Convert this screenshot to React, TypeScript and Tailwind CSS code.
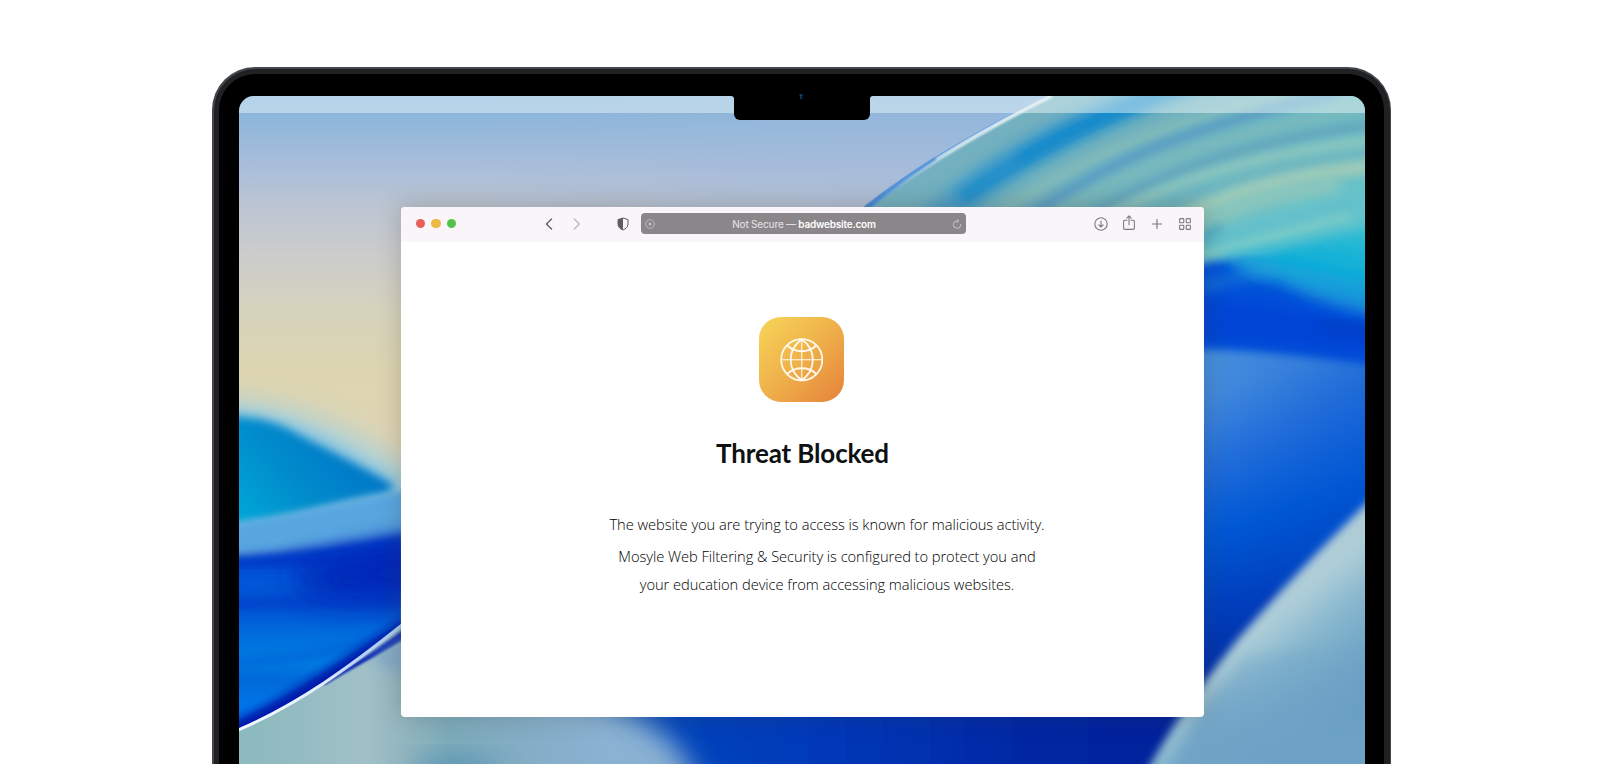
import React from "react";

function Wallpaper() {
  return (
    <svg
      className="absolute inset-0 h-full w-full"
      viewBox="239 95.5 1126 668.5"
      preserveAspectRatio="none"
      aria-hidden="true"
    >
      <defs>
        <linearGradient id="sky" gradientUnits="userSpaceOnUse" x1="0" y1="96" x2="0" y2="440">
          <stop offset="0" stopColor="#84b3dc" />
          <stop offset="0.07" stopColor="#8fb7da" />
          <stop offset="0.2" stopColor="#a9bdda" />
          <stop offset="0.32" stopColor="#bcc6d2" />
          <stop offset="0.46" stopColor="#cbcccb" />
          <stop offset="0.62" stopColor="#d6d3bd" />
          <stop offset="0.8" stopColor="#ddd5b0" />
          <stop offset="1" stopColor="#dfd4b4" />
        </linearGradient>
        <linearGradient id="skyRight" gradientUnits="userSpaceOnUse" x1="480" y1="0" x2="880" y2="0">
          <stop offset="0" stopColor="#a0b8dc" stopOpacity="0" />
          <stop offset="1" stopColor="#a0b8dc" stopOpacity="0.35" />
        </linearGradient>
        <linearGradient id="petal" gradientUnits="userSpaceOnUse" x1="239" y1="510" x2="340" y2="430">
          <stop offset="0" stopColor="#00a4d6" />
          <stop offset="0.5" stopColor="#008acb" />
          <stop offset="1" stopColor="#0078c8" />
        </linearGradient>
        <linearGradient id="deep" gradientUnits="userSpaceOnUse" x1="0" y1="545" x2="0" y2="740">
          <stop offset="0" stopColor="#0040cc" />
          <stop offset="0.2" stopColor="#0058d8" />
          <stop offset="0.3" stopColor="#004ed0" />
          <stop offset="0.45" stopColor="#006cdc" />
          <stop offset="0.6" stopColor="#007ee2" />
          <stop offset="0.68" stopColor="#0068d8" />
          <stop offset="0.82" stopColor="#0076e8" />
          <stop offset="1" stopColor="#0054d8" />
        </linearGradient>
        <linearGradient id="royal" gradientUnits="userSpaceOnUse" x1="1200" y1="350" x2="1300" y2="640">
          <stop offset="0" stopColor="#4690dc" />
          <stop offset="0.15" stopColor="#4189dc" />
          <stop offset="0.38" stopColor="#1f6cda" />
          <stop offset="0.58" stopColor="#0058d4" />
          <stop offset="0.8" stopColor="#0040be" />
          <stop offset="1" stopColor="#0030a8" />
        </linearGradient>
        <linearGradient id="royalEdge" gradientUnits="userSpaceOnUse" x1="1220" y1="0" x2="1365" y2="0">
          <stop offset="0" stopColor="#0052d2" stopOpacity="0" />
          <stop offset="1" stopColor="#0052d2" stopOpacity="0.35" />
        </linearGradient>
        <linearGradient id="ice" gradientUnits="userSpaceOnUse" x1="1255" y1="610" x2="1345" y2="718">
          <stop offset="0" stopColor="#b0cdd8" />
          <stop offset="0.15" stopColor="#abccd7" />
          <stop offset="0.4" stopColor="#88b7ce" />
          <stop offset="0.7" stopColor="#72a7c7" />
          <stop offset="1" stopColor="#6498c2" />
        </linearGradient>
        <linearGradient id="iceLow" gradientUnits="userSpaceOnUse" x1="0" y1="610" x2="0" y2="740">
          <stop offset="0" stopColor="#6ea2c6" stopOpacity="0" />
          <stop offset="1" stopColor="#6ea2c6" stopOpacity="0.9" />
        </linearGradient>
        <linearGradient id="bottom" gradientUnits="userSpaceOnUse" x1="239" y1="0" x2="1200" y2="0">
          <stop offset="0" stopColor="#8bbabf" />
          <stop offset="0.06" stopColor="#93bcc2" />
          <stop offset="0.13" stopColor="#a2c0c8" />
          <stop offset="0.17" stopColor="#93b6bf" />
          <stop offset="0.22" stopColor="#7cabb9" />
          <stop offset="0.3" stopColor="#84adc6" />
          <stop offset="0.38" stopColor="#8ab2d2" />
          <stop offset="1" stopColor="#8ab2d2" />
        </linearGradient>
        <linearGradient id="bottomBlue" gradientUnits="userSpaceOnUse" x1="640" y1="0" x2="1180" y2="0">
          <stop offset="0" stopColor="#0046bc" />
          <stop offset="0.35" stopColor="#0038b8" />
          <stop offset="0.7" stopColor="#0028a4" />
          <stop offset="1" stopColor="#00209a" />
        </linearGradient>
        <linearGradient id="rim" gradientUnits="userSpaceOnUse" x1="864" y1="207" x2="1050" y2="96">
          <stop offset="0" stopColor="#3f86d8" />
          <stop offset="0.25" stopColor="#9cc4e0" />
          <stop offset="0.5" stopColor="#d3e6ee" />
          <stop offset="1" stopColor="#f0f4f8" />
        </linearGradient>
        <linearGradient id="lowerRim" gradientUnits="userSpaceOnUse" x1="239" y1="0" x2="401" y2="0">
          <stop offset="0" stopColor="#f4f9ff" />
          <stop offset="0.5" stopColor="#e4effd" />
          <stop offset="0.75" stopColor="#b6d0f6" />
          <stop offset="1" stopColor="#a9cdf0" />
        </linearGradient>
        <linearGradient id="swoosh" gradientUnits="userSpaceOnUse" x1="1000" y1="110" x2="1130" y2="320">
          <stop offset="0" stopColor="#74b0c0" />
          <stop offset="0.4" stopColor="#72b3be" />
          <stop offset="1" stopColor="#68c0c8" />
        </linearGradient>
        <linearGradient id="cyanFall" gradientUnits="userSpaceOnUse" x1="1320" y1="225" x2="1300" y2="320">
          <stop offset="0" stopColor="#2abbd4" />
          <stop offset="0.4" stopColor="#0eaed8" />
          <stop offset="0.7" stopColor="#1c92da" />
          <stop offset="1" stopColor="#0c5cd8" />
        </linearGradient>
        <filter id="b1" x="-20%" y="-20%" width="140%" height="140%"><feGaussianBlur stdDeviation="0.8" /></filter>
        <filter id="b3" x="-30%" y="-30%" width="160%" height="160%"><feGaussianBlur stdDeviation="3.4" /></filter>
        <filter id="b4" x="-30%" y="-30%" width="160%" height="160%"><feGaussianBlur stdDeviation="4.4" /></filter>
        <filter id="b7" x="-40%" y="-40%" width="180%" height="180%"><feGaussianBlur stdDeviation="7" /></filter>
        <filter id="b14" x="-50%" y="-50%" width="200%" height="200%"><feGaussianBlur stdDeviation="14" /></filter>
        <clipPath id="swooshClip">
          <path d="M864 207 C917 167 985 126 1053 94 L1400 80 L1400 400 L800 400 Z" />
        </clipPath>
        <clipPath id="lowerClip">
          <path d="M200 752 L239 729 C300 703 350 666 401 626 L401 400 L200 400 Z" />
        </clipPath>
        <clipPath id="glassClip">
          <path d="M239 729 C300 703 350 666 401 625 L900 625 L900 770 L239 770 Z" />
        </clipPath>
      </defs>

      {/* sky */}
      <rect x="239" y="95" width="1126" height="670" fill="url(#sky)" />
      <rect x="480" y="95" width="620" height="120" fill="url(#skyRight)" />

      {/* left petal and its halo */}
      <path d="M180 402 C270 394 330 420 392 458 L450 496 L450 560 L180 560 Z" fill="#a6d2dc" filter="url(#b14)" />
      <path d="M180 412 C270 402 320 434 396 480 L420 540 L180 560 Z" fill="#7cc0e0" filter="url(#b7)" />
      <path d="M180 416 C255 413 274 421 296 433 C330 451 366 468 392 484 Q396 490 376 494 C330 502 280 521 180 529 Z" fill="url(#petal)" filter="url(#b4)" />
      <path d="M180 530 C280 521 340 502 430 486 L430 528 C350 540 290 552 180 554 Z" fill="#58a6e0" filter="url(#b3)" />

      {/* left blue folds */}
      <g clipPath="url(#lowerClip)">
        <path d="M180 556 C270 554 330 544 440 526 L440 780 L180 780 Z" fill="url(#deep)" filter="url(#b4)" />
        <path d="M290 568 C330 558 370 548 440 536 L440 595 C390 602 340 604 300 592 Z" fill="#0022b2" opacity="0.75" filter="url(#b14)" />
        <path d="M330 564 C370 554 400 548 440 540 L440 592 C400 598 370 596 330 586 Z" fill="#0022b6" opacity="0.5" filter="url(#b14)" />
        <path d="M190 564 C270 562 320 560 420 552" fill="none" stroke="#002cbc" strokeWidth="7" opacity="0.6" filter="url(#b4)" />
        <path d="M190 604 C270 602 320 606 430 584" fill="none" stroke="#0034c4" strokeWidth="8" opacity="0.45" filter="url(#b4)" />
        <path d="M190 664 C270 662 320 656 380 638" fill="none" stroke="#0054d0" strokeWidth="8" opacity="0.5" filter="url(#b4)" />
        <path d="M229 742 C300 708 350 672 412 630 L412 614 C350 652 300 690 229 724 Z" fill="#0018a8" filter="url(#b4)" />
      </g>

      {/* bottom left glass */}
      <g clipPath="url(#glassClip)">
        <rect x="239" y="620" width="660" height="150" fill="url(#bottom)" />
        <path d="M322 684 C350 666 376 650 410 624 L412 634 C380 654 352 668 326 684 Z" fill="#0c2cb4" filter="url(#b1)" />
        <path d="M370 656 C382 648 396 640 420 630 L420 668 L392 672 Z" fill="#6f9ccc" opacity="0.5" filter="url(#b7)" />
        <ellipse cx="455" cy="772" rx="44" ry="14" fill="#4c8bb4" opacity="0.75" filter="url(#b14)" />
      </g>
      <path d="M237 730 C300 703 350 666 402 624.5" fill="none" stroke="url(#lowerRim)" strokeWidth="3" />

      {/* right royal field */}
      <rect x="1190" y="330" width="190" height="434" fill="url(#royal)" />
      <rect x="1220" y="330" width="160" height="260" fill="url(#royalEdge)" />
      <path d="M575 690 C645 712 685 740 700 790 L1220 790 L1220 690 Z" fill="url(#bottomBlue)" filter="url(#b14)" />
      <path d="M720 700 L1220 700 L1220 780 L740 780 Z" fill="url(#bottomBlue)" filter="url(#b7)" />
      <path d="M1410 464 L1363 507 C1322 547 1275 596 1238 639 C1206 680 1178 714 1142 780 L1410 800 Z" fill="url(#ice)" filter="url(#b4)" />
      <path d="M1245 655 C1214 692 1190 724 1166 780 L1400 800 L1400 640 Z" fill="url(#iceLow)" filter="url(#b7)" />

      {/* upper right swoosh */}
      <g clipPath="url(#swooshClip)">
        <rect x="850" y="90" width="520" height="190" fill="url(#swoosh)" />
        <path d="M1160 270 C1230 224 1300 195 1410 180 L1410 290 L1160 290 Z" fill="#66c4cc" filter="url(#b7)" />
        <path d="M905 250 C970 175 1060 125 1210 70" fill="none" stroke="#3d98cc" strokeWidth="28" opacity="0.65" filter="url(#b7)" />
        <path d="M960 200 C1005 168 1070 128 1200 78" fill="none" stroke="#128acb" strokeWidth="16" filter="url(#b7)" />
        <path d="M1020 158 C1060 134 1110 110 1200 78" fill="none" stroke="#128acb" strokeWidth="10" filter="url(#b4)" />
        <path d="M945 250 C1060 165 1150 125 1330 84" fill="none" stroke="#82bcba" strokeWidth="9" filter="url(#b4)" />
        <path d="M985 250 C1090 165 1180 128 1340 92" fill="none" stroke="#5a9fc4" strokeWidth="11" filter="url(#b4)" />
        <path d="M1000 250 C1110 170 1230 128 1410 100" fill="none" stroke="#7cb9bb" strokeWidth="8" filter="url(#b4)" />
        <path d="M1040 250 C1150 168 1260 136 1410 120" fill="none" stroke="#64a6bc" strokeWidth="10" filter="url(#b4)" />
        <path d="M1050 250 C1160 176 1270 150 1410 136" fill="none" stroke="#8ec6bd" strokeWidth="9" filter="url(#b4)" />
        <path d="M1100 250 C1190 182 1290 162 1410 150" fill="none" stroke="#70b4be" strokeWidth="8" filter="url(#b4)" />
        <path d="M1110 260 C1210 188 1300 172 1410 162" fill="none" stroke="#9dcab8" strokeWidth="15" filter="url(#b4)" />
        <path d="M1150 250 C1220 208 1270 194 1340 184" fill="none" stroke="#8ec8bc" strokeWidth="16" filter="url(#b7)" />
        <path d="M1170 256 C1230 240 1270 222 1360 200" fill="none" stroke="#5ebccb" strokeWidth="9" filter="url(#b7)" />
        <path d="M1170 264 C1230 248 1270 236 1350 216" fill="none" stroke="#7acbc6" strokeWidth="9" filter="url(#b4)" />
        <path d="M1180 250 L1222 226" fill="none" stroke="#3f9fc4" strokeWidth="7" opacity="0.7" filter="url(#b4)" />
      </g>

      {/* cobalt band and the cyan wash falling into it */}
      <path d="M1160 276 C1215 254 1245 258 1275 266 L1420 270 L1420 368 C1330 362 1260 344 1160 350 Z" fill="#0050d8" filter="url(#b4)" />
      <path d="M1170 296 C1260 300 1310 312 1420 332 L1420 358 C1330 354 1260 336 1170 340 Z" fill="#0044d6" filter="url(#b7)" />
      <path d="M1226 258 C1290 248 1340 232 1420 214 L1420 324 C1350 312 1310 298 1280 282 C1258 280 1240 272 1226 258 Z" fill="url(#cyanFall)" filter="url(#b7)" />
      <path d="M1200 286 C1225 280 1250 276 1275 264" fill="none" stroke="#2e94d8" strokeWidth="8" opacity="0.6" filter="url(#b7)" />
      <path d="M1320 324 L1420 340" fill="none" stroke="#003cc0" strokeWidth="16" opacity="0.6" filter="url(#b7)" />

      {/* bright rim */}
      <path d="M864 207 C917 167 985 126 1051 95 L1047 95 C982 126 916 166 863 207 Z" fill="#3b82dc" />
      <path d="M868 207 C918 169 985 128.5 1052 95" fill="none" stroke="url(#rim)" strokeWidth="4" filter="url(#b1)" />
      <path d="M865 208 C891 188 911 174 936 158" fill="none" stroke="#3480d4" strokeWidth="2.4" opacity="0.8" filter="url(#b1)" />
    </svg>
  );
}

function ShieldIcon() {
  return (
    <svg className="h-[14px] w-[12px]" viewBox="0 0 12 14" fill="none" aria-hidden="true">
      <path d="M6 1 L11 2.6 V7 C11 10 8.6 12 6 13 C3.4 12 1 10 1 7 V2.6 Z" stroke="#5f5b60" strokeWidth="1" strokeLinejoin="round" />
      <path d="M6 1 V13 C3.4 12 1 10 1 7 V2.6 Z" fill="#5f5b60" />
    </svg>
  );
}

function Toolbar() {
  return (
    <div className="flex h-[35px] shrink-0 items-center bg-[#f9f5f9] pb-[2px]">
      <div className="ml-[14.5px] flex gap-[6px]">
        <span className="size-[9.5px] rounded-full bg-[#e5605a]" />
        <span className="size-[9.5px] rounded-full bg-[#eeb844]" />
        <span className="size-[9.5px] rounded-full bg-[#56c24c]" />
      </div>
      <svg className="ml-[88.5px] h-[12px] w-[8px]" viewBox="0 0 8 12" fill="none" stroke="#5f5b60" strokeWidth="1.3" strokeLinecap="round" strokeLinejoin="round" aria-hidden="true">
        <path d="M6.6 1 L1.4 6 L6.6 11" />
      </svg>
      <svg className="ml-[20px] h-[12px] w-[8px]" viewBox="0 0 8 12" fill="none" stroke="#bcb8bd" strokeWidth="1.3" strokeLinecap="round" strokeLinejoin="round" aria-hidden="true">
        <path d="M1.2 1 L6.4 6 L1.2 11" />
      </svg>
      <div className="ml-[36.5px] flex">
        <ShieldIcon />
      </div>
      <div className="ml-[12px] flex h-[21px] w-[325px] items-center justify-between rounded-[4px] bg-[#8a8689] px-[4px]">
        <svg className="size-[10px]" viewBox="0 0 10 10" fill="none" stroke="#c3c0c3" strokeWidth="0.9" aria-hidden="true">
          <circle cx="5" cy="5" r="4.3" />
          <circle cx="5" cy="5" r="1.5" fill="#c3c0c3" stroke="none" />
        </svg>
        <p className="pl-[1px] font-['Inter','Liberation_Sans',sans-serif] text-[10px] leading-[14px] font-medium tracking-[-0.2px] whitespace-nowrap text-[#dedcde]">
          Not Secure — <span className="font-semibold text-white">badwebsite.com</span>
        </p>
        <svg className="size-[10px]" viewBox="0 0 10 10" fill="none" stroke="#c8c5c8" strokeWidth="1" strokeLinecap="round" strokeLinejoin="round" aria-hidden="true">
          <path d="M8.7 5.4 A3.7 3.7 0 1 1 5 1.9 H6.2" />
          <path d="M4.9 0.3 L6.6 1.9 L4.9 3.5" />
        </svg>
      </div>
      <div className="ml-auto flex items-center pr-[13px] text-[#7d797e]">
        <svg className="size-[14px]" viewBox="0 0 14 14" fill="none" stroke="currentColor" strokeWidth="1.1" strokeLinecap="round" strokeLinejoin="round" aria-hidden="true">
          <circle cx="7" cy="7" r="6.2" />
          <path d="M7 4 V9.8 M4.8 7.8 L7 10 L9.2 7.8" />
        </svg>
        <svg className="-mt-[1px] ml-[15px] h-[16px] w-[12px]" viewBox="0 0 12 16" fill="none" stroke="currentColor" strokeWidth="1.1" strokeLinecap="round" strokeLinejoin="round" aria-hidden="true">
          <path d="M4 5.3 H1.8 Q0.6 5.3 0.6 6.5 V13.2 Q0.6 14.4 1.8 14.4 H10.2 Q11.4 14.4 11.4 13.2 V6.5 Q11.4 5.3 10.2 5.3 H8" />
          <path d="M6 9.8 V1 M3.8 3.1 L6 0.9 L8.2 3.1" />
        </svg>
        <svg className="ml-[17px] size-[10px]" viewBox="0 0 10 10" fill="none" stroke="currentColor" strokeWidth="1.2" strokeLinecap="round" aria-hidden="true">
          <path d="M5 0.5 V9.5 M0.5 5 H9.5" />
        </svg>
        <svg className="ml-[17px] size-[12px]" viewBox="0 0 12 12" fill="none" stroke="currentColor" strokeWidth="1.1" aria-hidden="true">
          <rect x="0.6" y="0.6" width="4.2" height="4.2" rx="0.7" />
          <rect x="7.2" y="0.6" width="4.2" height="4.2" rx="0.7" />
          <rect x="0.6" y="7.2" width="4.2" height="4.2" rx="0.7" />
          <rect x="7.2" y="7.2" width="4.2" height="4.2" rx="0.7" />
        </svg>
      </div>
    </div>
  );
}

function GlobeTile() {
  return (
    <div className="mr-[2.5px] flex h-[84.5px] w-[85.5px] items-center justify-center rounded-[22px] bg-linear-to-br from-[#f6d658] via-[#efb04a] to-[#e5813a]">
      <svg className="mt-[1px] size-[43.5px]" viewBox="0 0 44 44" fill="none" stroke="#fffaf0" strokeWidth="1.8" aria-hidden="true">
        <circle cx="22" cy="22" r="20.8" />
        <path d="M22 1.2 V42.8 M1.2 22 H42.8" strokeWidth="1.1" />
        <path d="M22 1.2 C14 7 10.8 14 10.8 22 C10.8 30 14 37 22 42.8 C30 37 33.2 30 33.2 22 C33.2 14 30 7 22 1.2 Z" />
        <path d="M7.3 7.6 C11.5 11.6 16.5 13.4 22 13.4 C27.5 13.4 32.5 11.6 36.7 7.6" />
        <path d="M7.3 36.4 C11.5 32.4 16.5 30.6 22 30.6 C27.5 30.6 32.5 32.4 36.7 36.4" />
      </svg>
    </div>
  );
}

function BrowserWindow() {
  return (
    <div className="relative flex h-[510px] w-[803px] flex-col overflow-hidden rounded-[4px] bg-white shadow-[0_-2px_24px_rgba(60,50,50,0.26)]">
      <Toolbar />
      <main className="flex flex-col items-center pt-[75px]">
        <GlobeTile />
        <h1 className="mt-[34px] font-['Lato','Open_Sans',sans-serif] text-[26px] leading-[34px] font-bold tracking-[-0.14px] whitespace-nowrap text-[#0e1111]">
          Threat Blocked
        </h1>
        <div className="mt-[40.5px] pl-[49px] text-center font-['Open_Sans','Noto_Sans',sans-serif] text-[14.7px] leading-[28px] font-light tracking-[-0.06px] whitespace-nowrap text-black">
          <p>The website you are trying to access is known for malicious activity.</p>
          <p className="mt-[4px]">
            Mosyle Web Filtering &amp; Security is configured to protect you and
            <br />
            your education device from accessing malicious websites.
          </p>
        </div>
      </main>
    </div>
  );
}

function Notch() {
  return (
    <div className="absolute top-0 left-[495px] h-[24.5px] w-[136px] rounded-b-[6px] bg-black">
      <svg className="absolute top-0 -left-[3px] h-[3px] w-[142px]" viewBox="0 0 142 3" aria-hidden="true">
        <path d="M0 0 Q3 0 3 3 V0 Z M142 0 Q139 0 139 3 V0 Z" fill="#000" />
      </svg>
      <svg className="absolute -top-[2px] left-[65px] h-[6px] w-[4px]" viewBox="0 0 4 6" aria-hidden="true">
        <path d="M0.5 1 H3.5 M2 1 V5" stroke="#1f5f92" strokeWidth="1.1" />
      </svg>
    </div>
  );
}

export default function App() {
  return (
    <div className="h-[764px] w-full overflow-hidden bg-white pt-[67px] pl-[212px]">
      <div className="h-[760px] w-[1179px] rounded-[43px] bg-[#43464d] p-[1.5px]">
        <div className="h-full rounded-[41.5px] bg-[#1f2123] p-[5.5px]">
          <div className="h-full rounded-[36px] bg-black px-[20px] pt-[21.5px]">
            <div className="relative h-[668.5px] w-[1125.5px] rounded-t-[15px]">
              <div className="absolute inset-0 overflow-hidden rounded-t-[15px]">
                <Wallpaper />
                <div className="relative h-[17.5px] bg-[#e6f4f6]/50" />
              </div>
              <div className="relative flex pt-[111.5px] pl-[162px]">
                <BrowserWindow />
              </div>
              <Notch />
            </div>
          </div>
        </div>
      </div>
    </div>
  );
}
